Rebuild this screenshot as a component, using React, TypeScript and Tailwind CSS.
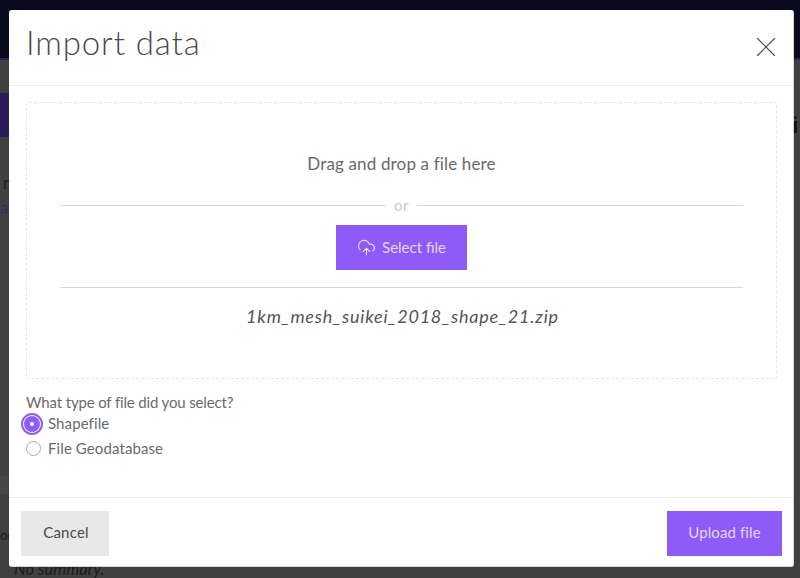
import { CloudUpload, X } from "lucide-react";

function Radio({ label, checked }: { label: string; checked?: boolean }) {
  return (
    <label className="flex items-center gap-[7px] h-[25px] text-[15px] text-[#6a6a6a] tracking-[0.1px]">
      {checked ? (
        <span className="ml-[-5px] mr-[-2px] w-[22px] h-[22px] rounded-full border-2 border-[#8f5cf9] bg-white flex items-center justify-center">
          <span className="w-4 h-4 rounded-full bg-[#8f5cf9] flex items-center justify-center">
            <span className="w-1 h-1 rounded-full bg-white" />
          </span>
        </span>
      ) : (
        <span className="w-[15px] h-[15px] rounded-full border border-[#a8a8a8] bg-white" />
      )}
      {label}
    </label>
  );
}

export default function App() {
  return (
    <div className="relative w-[800px] h-[578px] overflow-hidden bg-[#404040] font-['Lato',sans-serif]">
      <div className="h-[58px] bg-[#0a0a1e]" />
      <div className="h-[2px] bg-[#2a1f52]" />
      <div className="flex justify-between">
        <div className="flex flex-col">
          <div className="mt-[33px] w-[9px] h-[44px] bg-[#2a1a58]" />
          <span className="mt-[36px] pl-[3px] h-5 text-[17px] leading-[20px] text-[#1c1c1c]">r</span>
          <span className="mt-[4px] h-5 text-[16px] leading-[20px] text-[#2f2c5a]">ar</span>
          <div className="mt-[259px] w-[9px] h-[18px] bg-[#474747]" />
          <span className="mt-[31px] h-5 text-[13px] leading-[20px] text-[#1c1c1c]">oc</span>
          <span className="mt-[14px] ml-[14px] w-[100px] text-[16.5px] leading-[20px] italic text-[#1c1c1c]">No summary.</span>
        </div>
        <div className="pt-[56px] pr-[3px] flex flex-col items-center gap-[2px]">
          <span className="w-[3px] h-[3px] rounded-full bg-[#161616]" />
          <span className="w-[3px] h-[12px] bg-[#161616]" />
        </div>
      </div>

      <div className="absolute left-[9px] top-[10px] w-[785px] h-[557px] bg-white rounded-[3px] border-r border-b border-[#d4d4d4] flex flex-col">
        <div className="h-[76px] flex items-center justify-between border-b border-[#ececec] pl-[17px] pr-[10px] shrink-0">
          <h1 className="text-[33px] font-light tracking-[0.9px] text-[#4a4a4a] mt-[-9px]">Import data</h1>
          <X className="w-[34px] h-[34px] text-[#4a4a4a] mt-[-2px]" strokeWidth={0.8} />
        </div>

        <div className="flex-1 px-[17px] pt-4">
          <div className="h-[277px] w-[751px] border border-dashed border-[#e6e6e6] rounded-[3px] px-[33px] pt-[51px] flex flex-col items-center">
            <p className="text-[17px] text-[#6a6a6a] tracking-[0.15px] leading-[20px]">Drag and drop a file here</p>
            <div className="w-full flex items-center gap-2 mt-[21px] h-[20px]">
              <div className="flex-1 h-px bg-[#d8d8d8]" />
              <span className="text-[15px] text-[#c9c9c9] tracking-[0.5px]">or</span>
              <div className="flex-1 h-px bg-[#d8d8d8]" />
            </div>
            <button className="mt-[10px] w-[131px] h-[45px] bg-[#8e5bf8] text-[#e3d6fd] text-[15px] flex items-center justify-center gap-[6px]">
              <CloudUpload className="w-[19px] h-[19px] text-[#f0e9fe]" strokeWidth={1.3} />
              Select file
            </button>
            <div className="w-full h-px bg-[#d8d8d8] mt-[17px]" />
            <p className="mt-[18px] ml-[2px] text-[18px] italic text-[#555555] tracking-[0.8px] leading-[20px]">1km_mesh_suikei_2018_shape_21.zip</p>
          </div>

          <p className="mt-[14px] text-[15px] text-[#6a6a6a] tracking-[-0.15px] leading-[18px]">What type of file did you select?</p>
          <div className="flex flex-col">
            <Radio label="Shapefile" checked />
            <Radio label="File Geodatabase" />
          </div>
        </div>

        <div className="h-[69px] border-t border-[#ececec] pl-[12px] pr-[11px] pt-[3px] flex items-center justify-between shrink-0">
          <button className="w-[88px] h-[45px] pb-[2px] pl-[2px] bg-[#e8e8e8] text-[#4a4a4a] text-[15px] tracking-[0.2px]">Cancel</button>
          <button className="w-[115px] h-[45px] pb-[2px] bg-[#8e5bf8] text-[#e3d6fd] text-[15px] tracking-[0.1px]">Upload file</button>
        </div>
      </div>
    </div>
  );
}
